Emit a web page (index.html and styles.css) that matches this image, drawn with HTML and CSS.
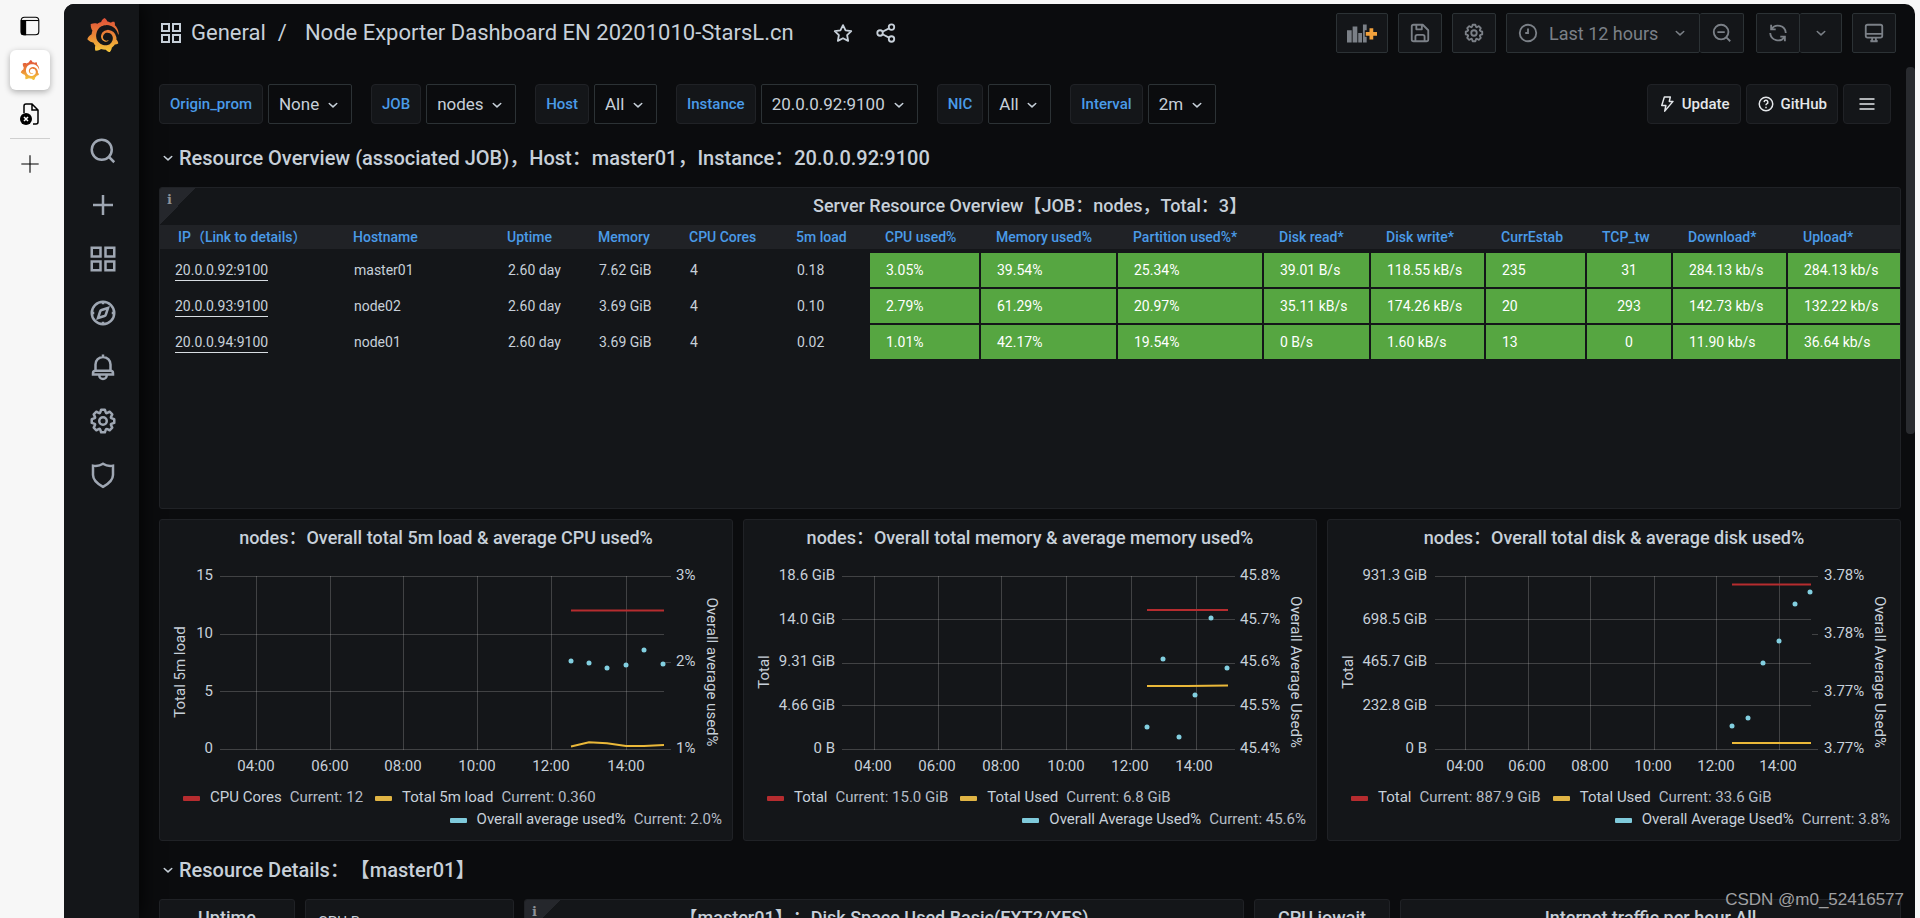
FILE: index.html
```html
<!DOCTYPE html>
<html lang="en">
<head>
<meta charset="utf-8">
<title>Node Exporter Dashboard EN 20201010-StarsL.cn</title>
<link rel="stylesheet" href="styles.css">
</head>
<body>
<svg width="0" height="0" class="defs" aria-hidden="true">
  <defs>
    <linearGradient id="flame" x1="0" y1="0" x2="0" y2="1"><stop offset="0" stop-color="#e0503a"/><stop offset=".5" stop-color="#ea8436"/><stop offset="1" stop-color="#f5c93c"/></linearGradient>
    <symbol id="logo" viewBox="0 0 24 24"><path fill="url(#flame)" d="M23.02 10.59a8.578 8.578 0 0 0-.862-3.034 8.911 8.911 0 0 0-1.789-2.445c.337-1.342-.413-2.505-.413-2.505-1.292-.08-2.113.4-2.416.62-.052-.02-.102-.044-.154-.064-.22-.089-.446-.172-.677-.247-.231-.073-.47-.14-.711-.197a9.867 9.867 0 0 0-.875-.161C14.557.753 12.94 0 12.94 0c-1.804 1.145-2.147 2.744-2.147 2.744l-.018.093c-.098.029-.2.057-.298.088-.138.042-.275.094-.413.143-.138.055-.275.107-.41.166a8.869 8.869 0 0 0-1.557.87l-.063-.029c-2.497-.955-4.716.195-4.716.195-.203 2.658.996 4.33 1.235 4.636a11.608 11.608 0 0 0-.607 2.635C1.636 12.677.953 15.014.953 15.014c1.926 2.214 4.171 2.351 4.171 2.351.003-.002.006-.002.006-.005.285.509.615.994.986 1.446.156.19.32.371.488.548-.704 2.009.099 3.68.099 3.68 2.144.08 3.553-.937 3.849-1.173a9.784 9.784 0 0 0 3.164.501h.08l.055-.003.107-.002.103-.005.003.002c1.01 1.44 2.788 1.646 2.788 1.646 1.264-1.332 1.337-2.653 1.337-2.94v-.058c0-.02-.003-.039-.003-.06.265-.187.52-.387.758-.6a7.875 7.875 0 0 0 1.415-1.7c1.43.083 2.437-.885 2.437-.885-.236-1.49-1.085-2.216-1.264-2.354l-.018-.013-.016-.013a.217.217 0 0 1-.031-.02c.008-.092.016-.18.02-.27.011-.162.016-.323.016-.48v-.253l-.005-.098-.008-.135a1.891 1.891 0 0 0-.01-.13c-.003-.042-.008-.083-.013-.125l-.016-.124-.018-.122a6.215 6.215 0 0 0-2.032-3.73 6.015 6.015 0 0 0-3.222-1.46 6.292 6.292 0 0 0-.85-.048l-.107.002h-.063l-.044.003-.104.008a4.777 4.777 0 0 0-3.335 1.695c-.332.4-.592.84-.768 1.297a4.594 4.594 0 0 0-.312 1.817l.003.091c.005.055.007.11.013.164a3.615 3.615 0 0 0 .698 1.82 3.53 3.53 0 0 0 1.827 1.282c.33.098.66.14.971.137.039 0 .078 0 .114-.002l.063-.003c.02 0 .041-.003.062-.003.034-.002.065-.007.099-.01.007 0 .018-.003.028-.003l.031-.005.06-.008a1.18 1.18 0 0 0 .112-.02c.036-.008.072-.013.109-.024a2.634 2.634 0 0 0 .914-.415c.028-.02.056-.041.085-.065a.248.248 0 0 0 .039-.35.244.244 0 0 0-.309-.06l-.078.042c-.09.044-.184.083-.283.116a2.476 2.476 0 0 1-.475.096c-.028.003-.054.006-.083.006l-.083.002c-.026 0-.054 0-.08-.002l-.102-.006h-.012l-.024.006c-.016-.003-.031-.003-.044-.006-.031-.002-.06-.007-.091-.01a2.59 2.59 0 0 1-.724-.213 2.557 2.557 0 0 1-.667-.438 2.52 2.52 0 0 1-.805-1.475 2.306 2.306 0 0 1-.029-.444l.006-.122v-.023l.002-.031c.003-.021.003-.04.005-.06a3.163 3.163 0 0 1 1.352-2.29 3.12 3.12 0 0 1 .937-.43 2.946 2.946 0 0 1 .776-.101h.06l.07.002.045.003h.026l.07.005a4.041 4.041 0 0 1 1.635.49 3.94 3.94 0 0 1 1.602 1.662 3.77 3.77 0 0 1 .397 1.414l.005.076.003.075c.002.026.002.05.002.075 0 .024.003.052 0 .07v.065l-.002.073-.008.174a6.195 6.195 0 0 1-.08.639 5.1 5.1 0 0 1-.267.927 5.31 5.31 0 0 1-.624 1.13 5.052 5.052 0 0 1-3.237 2.014 4.82 4.82 0 0 1-.649.066l-.039.003h-.287a6.607 6.607 0 0 1-1.716-.265 6.776 6.776 0 0 1-3.4-2.274 6.75 6.75 0 0 1-.746-1.15 6.616 6.616 0 0 1-.714-2.596l-.005-.083-.002-.02v-.056l-.003-.073v-.096l-.003-.104v-.07l.003-.163c.008-.22.026-.45.054-.678a8.707 8.707 0 0 1 .28-1.355c.128-.444.286-.872.473-1.277a7.04 7.04 0 0 1 1.456-2.1 5.925 5.925 0 0 1 .953-.763c.169-.111.343-.213.524-.306.089-.05.182-.091.273-.135.047-.02.093-.042.138-.062a7.177 7.177 0 0 1 .714-.267l.145-.045c.049-.015.098-.026.148-.041.098-.029.197-.052.296-.076.049-.013.1-.02.15-.033l.15-.032.151-.028.076-.013.075-.01.153-.024c.057-.01.114-.013.171-.023l.169-.021c.036-.003.073-.008.106-.01l.073-.008.036-.003.042-.002c.057-.003.114-.008.171-.01l.086-.006h.023l.037-.003.145-.007a7.999 7.999 0 0 1 1.708.125 7.917 7.917 0 0 1 2.048.68 8.253 8.253 0 0 1 1.672 1.09l.09.077.089.078c.06.052.114.107.171.159.057.052.112.106.166.16.052.055.107.107.159.164a8.671 8.671 0 0 1 1.41 1.978c.012.026.028.052.04.078l.04.078.075.156c.023.051.05.1.07.153l.065.15a8.848 8.848 0 0 1 .45 1.34.19.19 0 0 0 .201.142.186.186 0 0 0 .172-.184c.01-.246.002-.532-.024-.856z"/></symbol>
    <symbol id="apps" viewBox="0 0 24 24"><path d="M3 3h7v7H3zM14 3h7v7h-7zM3 14h7v7H3zM14 14h7v7h-7z"/></symbol>
    <symbol id="search" viewBox="0 0 24 24"><circle cx="11" cy="11" r="8"/><path d="m17 17 4 4"/></symbol>
    <symbol id="plus" viewBox="0 0 24 24"><path d="M12 4v16M4 12h16"/></symbol>
    <symbol id="compass" viewBox="0 0 24 24"><circle cx="12" cy="12" r="9"/><path d="m16 8-1.700 5.200a2 2 0 0 1-1.200 1.200L8 16l1.700-5.200a2 2 0 0 1 1.200-1.200zM12 3v2M12 19v2M3 12h2M19 12h2"/></symbol>
    <symbol id="bell" viewBox="0 0 24 24"><path d="M12 2v2M6 15v-5a6 6 0 0 1 12 0v5M4 18v-1a2 2 0 0 1 2-2h12a2 2 0 0 1 2 2v1zM9 18.500a3 3 0 0 0 6 0"/></symbol>
    <symbol id="cog" viewBox="0 0 24 24"><path fill="currentColor" stroke="none" d="M21.32,9.55l-1.89-.63.89-1.78A1,1,0,0,0,20.13,6L18,3.87a1,1,0,0,0-1.15-.19l-1.78.89-.63-1.89A1,1,0,0,0,13.5,2h-3a1,1,0,0,0-.95.68L8.92,4.57,7.14,3.68A1,1,0,0,0,6,3.87L3.87,6a1,1,0,0,0-.19,1.15l.89,1.78-1.89.63A1,1,0,0,0,2,10.5v3a1,1,0,0,0,.68.95l1.89.63-.89,1.78A1,1,0,0,0,3.87,18L6,20.13a1,1,0,0,0,1.15.19l1.78-.89.63,1.89a1,1,0,0,0,.95.68h3a1,1,0,0,0,.95-.68l.63-1.89,1.78.89A1,1,0,0,0,18,20.13L20.13,18a1,1,0,0,0,.19-1.15l-.89-1.78,1.89-.63A1,1,0,0,0,22,13.5v-3A1,1,0,0,0,21.32,9.55ZM20,12.78l-1.2.4A2,2,0,0,0,17.64,16l.57,1.14-1.1,1.1L16,17.64a2,2,0,0,0-2.79,1.16l-.4,1.2H11.22l-.4-1.2A2,2,0,0,0,8,17.64l-1.14.57-1.1-1.1L6.36,16A2,2,0,0,0,5.2,13.18L4,12.78V11.22l1.2-.4A2,2,0,0,0,6.36,8L5.79,6.89l1.1-1.1L8,6.36A2,2,0,0,0,10.82,5.2l.4-1.2h1.56l.4,1.2A2,2,0,0,0,16,6.36l1.14-.57,1.1,1.1L17.64,8a2,2,0,0,0,1.16,2.79l1.2.4ZM12,8a4,4,0,1,0,4,4A4,4,0,0,0,12,8Zm0,6a2,2,0,1,1,2-2A2,2,0,0,1,12,14Z"/></symbol>
    <symbol id="shield" viewBox="0 0 24 24"><path d="M12 3c-2.500 1.600-5.200 2-8 1.500V12c0 4 3.500 7 8 9.500 4.500-2.500 8-5.500 8-9.500V4.500C17.200 5 14.500 4.600 12 3z"/></symbol>
    <symbol id="star" viewBox="0 0 24 24"><path stroke-linejoin="round" d="m12 3.400 2.800 5.700 6.200.9-4.500 4.400 1.100 6.200-5.600-2.900-5.600 2.900 1.100-6.200L3 10l6.200-.9z"/></symbol>
    <symbol id="share" viewBox="0 0 24 24"><circle cx="18" cy="5.500" r="3"/><circle cx="18" cy="18.500" r="3"/><circle cx="5.500" cy="12" r="3"/><path d="m8.200 10.600 7.100-3.700M8.200 13.400l7.100 3.700"/></symbol>
    <symbol id="save" viewBox="0 0 24 24"><path stroke-linejoin="round" d="M3 5a2 2 0 0 1 2-2h10l6 6v10a2 2 0 0 1-2 2H5a2 2 0 0 1-2-2zM8 3v5h6V3M7 21v-5a2 2 0 0 1 2-2h6a2 2 0 0 1 2 2v5"/></symbol>
    <symbol id="clock" viewBox="0 0 24 24"><circle cx="12" cy="12" r="9"/><path d="M12 7v5H9"/></symbol>
    <symbol id="zoom-out" viewBox="0 0 24 24"><circle cx="11" cy="11" r="8"/><path d="m17 17 4 4M7 11h8"/></symbol>
    <symbol id="sync" viewBox="0 0 24 24"><path d="M4.500 3v5h5M4.800 8a8.500 8.500 0 0 1 15.700 4M19.500 21v-5h-5M19.200 16a8.500 8.500 0 0 1-15.700-4"/></symbol>
    <symbol id="monitor" viewBox="0 0 24 24"><path d="M5 3h14a2 2 0 0 1 2 2v10a2 2 0 0 1-2 2H5a2 2 0 0 1-2-2V5a2 2 0 0 1 2-2zM3 13h18M10 17v2a1.500 1.500 0 0 1-1.500 1.500H8M14 17v2a1.500 1.500 0 0 0 1.500 1.500h.500M8 21h8"/></symbol>
    <symbol id="bolt" viewBox="0 0 24 24"><path stroke-linejoin="round" d="M8.500 2.500h8l-1.500 6h5L9 21.500l1.500-7.500H5z"/></symbol>
    <symbol id="question" viewBox="0 0 24 24"><circle cx="12" cy="12" r="9"/><path d="M9.500 9.500a2.500 2.500 0 1 1 3.500 2.300q-1 .5-1 1.700M12 15.500v2"/></symbol>
    <symbol id="bars" viewBox="0 0 24 24"><path d="M3 6h18M3 12h18M3 18h18"/></symbol>
    <symbol id="down" viewBox="0 0 24 24"><path stroke-linecap="round" stroke-linejoin="round" d="m7 10 5 4.500 5-4.500"/></symbol>
    <symbol id="add-panel" viewBox="0 0 32 20"><g fill="currentColor" stroke="none"><path d="M0 7h5v13H0zM6 3h5v17H6zM12 10h4v10h-4zM17 1h4v6h-2v7h2v6h-4z"/></g><path fill="#f2a13c" stroke="none" d="M24 5h4v4h4v4h-4v4h-4v-4h-4V9h4z"/></symbol>
    <symbol id="tabs" viewBox="0 0 20 20"><rect x="2" y="2" width="16" height="16" rx="3"/><path fill="currentColor" d="M2 5h4v13H4a2 2 0 0 1-2-2z"/><path d="M2 5h16"/></symbol>
    <symbol id="bad-file" viewBox="0 0 20 22"><path d="M4 10V3a2 2 0 0 1 2-2h6l6 6v12a2 2 0 0 1-2 2h-3M12 1v6h6"/><circle cx="6" cy="16" r="6" fill="currentColor" stroke="none"/><path stroke="#fff" d="m4 14 4 4M8 14l-4 4"/></symbol>
  </defs>
</svg>

<div class="browser">
  <nav class="tabs" aria-label="Browser tabs">
    <button class="tab" aria-label="Tab list"><svg class="ic s22"><use href="#tabs"/></svg></button>
    <button class="tab active" aria-label="Grafana"><svg class="ic s20"><use href="#logo"/></svg></button>
    <button class="tab" aria-label="Page error"><svg class="ic tab-file"><use href="#bad-file"/></svg></button>
    <hr class="tab-rule">
    <button class="tab" aria-label="New tab"><svg class="ic s26"><use href="#plus"/></svg></button>
  </nav>

  <div class="app">
    <nav class="side" aria-label="Main menu">
      <a class="brand" href="#" aria-label="Home"><svg class="ic s34"><use href="#logo"/></svg></a>
      <a href="#" aria-label="Search"><svg class="ic s30"><use href="#search"/></svg></a>
      <a href="#" aria-label="Create"><svg class="ic s30"><use href="#plus"/></svg></a>
      <a href="#" aria-label="Dashboards"><svg class="ic s30"><use href="#apps"/></svg></a>
      <a href="#" aria-label="Explore"><svg class="ic s30"><use href="#compass"/></svg></a>
      <a href="#" aria-label="Alerting"><svg class="ic s30"><use href="#bell"/></svg></a>
      <a href="#" aria-label="Configuration"><svg class="ic s30"><use href="#cog"/></svg></a>
      <a href="#" aria-label="Server admin"><svg class="ic s30"><use href="#shield"/></svg></a>
    </nav>

    <main class="main">
      <header class="top">
        <svg class="ic s24"><use href="#apps"/></svg>
        <h1 class="crumbs"><a href="#">General</a><span class="slash">/</span><a href="#">Node Exporter Dashboard EN 20201010-StarsL.cn</a></h1>
        <button class="plain" aria-label="Mark as favourite"><svg class="ic s22"><use href="#star"/></svg></button>
        <button class="plain" aria-label="Share"><svg class="ic s22"><use href="#share"/></svg></button>
        <div class="tools">
          <button class="tool add" aria-label="Add panel"><svg class="ic add-ic"><use href="#add-panel"/></svg></button>
          <button class="tool" aria-label="Save"><svg class="ic s22"><use href="#save"/></svg></button>
          <button class="tool" aria-label="Settings"><svg class="ic s22"><use href="#cog"/></svg></button>
          <div class="group wide-gap">
            <button class="tool range"><svg class="ic s22"><use href="#clock"/></svg><span class="range-text">Last 12 hours</span><svg class="ic s18"><use href="#down"/></svg></button>
            <button class="tool" aria-label="Zoom out"><svg class="ic s22"><use href="#zoom-out"/></svg></button>
          </div>
          <div class="group">
            <button class="tool" aria-label="Refresh"><svg class="ic s22"><use href="#sync"/></svg></button>
            <button class="tool small" aria-label="Refresh interval"><svg class="ic s18"><use href="#down"/></svg></button>
          </div>
          <button class="tool" aria-label="Kiosk mode"><svg class="ic s22"><use href="#monitor"/></svg></button>
        </div>
      </header>

      <div class="vars">
        <div class="var"><label for="v1">Origin_prom</label><span class="pick"><select id="v1"><option>None</option></select><svg class="ic s18"><use href="#down"/></svg></span></div>
        <div class="var"><label for="v2">JOB</label><span class="pick"><select id="v2"><option>nodes</option></select><svg class="ic s18"><use href="#down"/></svg></span></div>
        <div class="var"><label for="v3">Host</label><span class="pick"><select id="v3"><option>All</option></select><svg class="ic s18"><use href="#down"/></svg></span></div>
        <div class="var"><label for="v4">Instance</label><span class="pick"><select id="v4"><option>20.0.0.92:9100</option></select><svg class="ic s18"><use href="#down"/></svg></span></div>
        <div class="var"><label for="v5">NIC</label><span class="pick"><select id="v5"><option>All</option></select><svg class="ic s18"><use href="#down"/></svg></span></div>
        <div class="var"><label for="v6">Interval</label><span class="pick"><select id="v6"><option>2m</option></select><svg class="ic s18"><use href="#down"/></svg></span></div>
        <div class="links">
          <a class="link" href="#"><svg class="ic s18"><use href="#bolt"/></svg>Update</a>
          <a class="link" href="#"><svg class="ic s18"><use href="#question"/></svg>GitHub</a>
          <button class="link menu" aria-label="Dashboard links"><svg class="ic s20"><use href="#bars"/></svg></button>
        </div>
      </div>

      <h2 class="row-title"><svg class="ic s18"><use href="#down"/></svg>Resource Overview (associated JOB)，Host：master01，Instance：20.0.0.92:9100</h2>

      <section class="panel overview">
        <span class="info" aria-hidden="true"><i>i</i></span>
        <h3 class="panel-title">Server Resource Overview【JOB：nodes，Total：3】</h3>
        <table class="servers">
          <colgroup><col class="c178"><col class="c154"><col class="c91"><col class="c91"><col class="c107"><col class="c89"><col class="c111"><col class="c137"><col class="c146"><col class="c107"><col class="c115"><col class="c101"><col class="c86"><col class="c115"><col></colgroup>
          <thead><tr><th>IP（Link to details）</th><th>Hostname</th><th>Uptime</th><th>Memory</th><th>CPU Cores</th><th>5m load</th><th>CPU used%</th><th>Memory used%</th><th>Partition used%*</th><th>Disk read*</th><th>Disk write*</th><th>CurrEstab</th><th>TCP_tw</th><th>Download*</th><th>Upload*</th></tr></thead>
          <tbody>
            <tr><td><a href="#">20.0.0.92:9100</a></td><td>master01</td><td>2.60 day</td><td>7.62 GiB</td><td>4</td><td>0.18</td><td class="ok">3.05%</td><td class="ok">39.54%</td><td class="ok">25.34%</td><td class="ok">39.01 B/s</td><td class="ok">118.55 kB/s</td><td class="ok">235</td><td class="ok mid">31</td><td class="ok">284.13 kb/s</td><td class="ok">284.13 kb/s</td></tr>
            <tr><td><a href="#">20.0.0.93:9100</a></td><td>node02</td><td>2.60 day</td><td>3.69 GiB</td><td>4</td><td>0.10</td><td class="ok">2.79%</td><td class="ok">61.29%</td><td class="ok">20.97%</td><td class="ok">35.11 kB/s</td><td class="ok">174.26 kB/s</td><td class="ok">20</td><td class="ok mid">293</td><td class="ok">142.73 kb/s</td><td class="ok">132.22 kb/s</td></tr>
            <tr><td><a href="#">20.0.0.94:9100</a></td><td>node01</td><td>2.60 day</td><td>3.69 GiB</td><td>4</td><td>0.02</td><td class="ok">1.01%</td><td class="ok">42.17%</td><td class="ok">19.54%</td><td class="ok">0 B/s</td><td class="ok">1.60 kB/s</td><td class="ok">13</td><td class="ok mid">0</td><td class="ok">11.90 kb/s</td><td class="ok">36.64 kb/s</td></tr>
          </tbody>
        </table>
      </section>

      <div class="charts">
        <section class="panel">
          <h3 class="panel-title">nodes：Overall total 5m load &amp; average CPU used%</h3>
          <svg class="chart" viewBox="0 0 572 224" role="img" aria-label="Load and CPU chart">
            <path class="grid" d="M60 20.500h451M60 78.500h444M60 135.500h444M60 193.500h451M504 106.500h7M96.500 20v174M170.500 20v174M243.500 20v174M317.500 20v174M391.500 20v174M466.500 20v174"/>
            <g class="end"><text x="53" y="24">15</text><text x="53" y="82">10</text><text x="53" y="140">5</text><text x="53" y="197">0</text></g>
            <g><text x="516" y="24">3%</text><text x="516" y="110">2%</text><text x="516" y="197">1%</text></g>
            <g class="center"><text x="96" y="215">04:00</text><text x="170" y="215">06:00</text><text x="243" y="215">08:00</text><text x="317" y="215">10:00</text><text x="391" y="215">12:00</text><text x="466" y="215">14:00</text>
            <text transform="translate(25 116) rotate(-90)">Total 5m load</text><text transform="translate(547 116) rotate(90)">Overall average used%</text></g>
            <path class="red" d="M411 54.500h93"/>
            <path class="yellow" d="m411 190.500 18-4.200 18 1 19 2.700h18l20-1"/>
            <g class="dots"><circle cx="411" cy="105" r="2.500"/><circle cx="429" cy="107" r="2.500"/><circle cx="447" cy="112" r="2.500"/><circle cx="466" cy="109" r="2.500"/><circle cx="484" cy="94" r="2.500"/><circle cx="503" cy="108" r="2.500"/></g>
          </svg>
          <ul class="legend">
            <li><b class="sw red-sw"></b><span>CPU Cores</span><em>Current: 12</em></li>
            <li><b class="sw yellow-sw"></b><span>Total 5m load</span><em>Current: 0.360</em></li>
            <li class="right"><b class="sw blue-sw"></b><span>Overall average used%</span><em>Current: 2.0%</em></li>
          </ul>
        </section>
        <section class="panel">
          <h3 class="panel-title">nodes：Overall total memory &amp; average memory used%</h3>
          <svg class="chart" viewBox="0 0 572 224" role="img" aria-label="Memory chart">
            <path class="grid" d="M98 20.500h393M98 63.500h393M98 107.500h393M98 149.500h393M98 193.500h393M130.500 20v174M194.500 20v174M257.500 20v174M322.500 20v174M387.500 20v174M452.500 20v174"/>
            <g class="end"><text x="91" y="24">18.6 GiB</text><text x="91" y="68">14.0 GiB</text><text x="91" y="110">9.31 GiB</text><text x="91" y="154">4.66 GiB</text><text x="91" y="197">0 B</text></g>
            <g><text x="496" y="24">45.8%</text><text x="496" y="68">45.7%</text><text x="496" y="110">45.6%</text><text x="496" y="154">45.5%</text><text x="496" y="197">45.4%</text></g>
            <g class="center"><text x="129" y="215">04:00</text><text x="193" y="215">06:00</text><text x="257" y="215">08:00</text><text x="322" y="215">10:00</text><text x="386" y="215">12:00</text><text x="450" y="215">14:00</text>
            <text transform="translate(25 116) rotate(-90)">Total</text><text transform="translate(547 116) rotate(90)">Overall Average Used%</text></g>
            <path class="red" d="M403 54h81"/>
            <path class="yellow" d="M403 130h40l41-.500"/>
            <g class="dots"><circle cx="403" cy="171" r="2.500"/><circle cx="419" cy="103" r="2.500"/><circle cx="435" cy="181" r="2.500"/><circle cx="451" cy="139" r="2.500"/><circle cx="467" cy="62" r="2.500"/><circle cx="483" cy="112" r="2.500"/></g>
          </svg>
          <ul class="legend">
            <li><b class="sw red-sw"></b><span>Total</span><em>Current: 15.0 GiB</em></li>
            <li><b class="sw yellow-sw"></b><span>Total Used</span><em>Current: 6.8 GiB</em></li>
            <li class="right"><b class="sw blue-sw"></b><span>Overall Average Used%</span><em>Current: 45.6%</em></li>
          </ul>
        </section>
        <section class="panel">
          <h3 class="panel-title">nodes：Overall total disk &amp; average disk used%</h3>
          <svg class="chart" viewBox="0 0 572 224" role="img" aria-label="Disk chart">
            <path class="grid" d="M107 20.500h383M107 63.500h376M107 107.500h376M107 149.500h376M107 193.500h383M484 78.500h6M484 135.500h6M137.500 20v174M200.500 20v174M262.500 20v174M326.500 20v174M388.500 20v174M451.500 20v174"/>
            <g class="end"><text x="99" y="24">931.3 GiB</text><text x="99" y="68">698.5 GiB</text><text x="99" y="110">465.7 GiB</text><text x="99" y="154">232.8 GiB</text><text x="99" y="197">0 B</text></g>
            <g><text x="496" y="24">3.78%</text><text x="496" y="82">3.78%</text><text x="496" y="140">3.77%</text><text x="496" y="197">3.77%</text></g>
            <g class="center"><text x="137" y="215">04:00</text><text x="199" y="215">06:00</text><text x="262" y="215">08:00</text><text x="325" y="215">10:00</text><text x="388" y="215">12:00</text><text x="450" y="215">14:00</text>
            <text transform="translate(25 116) rotate(-90)">Total</text><text transform="translate(547 116) rotate(90)">Overall Average Used%</text></g>
            <path class="red" d="M404 28.500h79"/>
            <path class="yellow" d="M404 187h79"/>
            <g class="dots"><circle cx="404" cy="170" r="2.500"/><circle cx="420" cy="162" r="2.500"/><circle cx="435" cy="107" r="2.500"/><circle cx="451" cy="85" r="2.500"/><circle cx="467" cy="48" r="2.500"/><circle cx="482" cy="36" r="2.500"/></g>
          </svg>
          <ul class="legend">
            <li><b class="sw red-sw"></b><span>Total</span><em>Current: 887.9 GiB</em></li>
            <li><b class="sw yellow-sw"></b><span>Total Used</span><em>Current: 33.6 GiB</em></li>
            <li class="right"><b class="sw blue-sw"></b><span>Overall Average Used%</span><em>Current: 3.8%</em></li>
          </ul>
        </section>
      </div>

      <h2 class="row-title"><svg class="ic s18"><use href="#down"/></svg>Resource Details：【master01】</h2>

      <div class="details">
        <section class="panel"><h3 class="panel-title">Uptime</h3></section>
        <section class="panel"><p class="gauge-label">CPU Busy</p></section>
        <section class="panel"><span class="info" aria-hidden="true"><i>i</i></span><h3 class="panel-title">【master01】：Disk Space Used Basic(EXT2/XFS)</h3></section>
        <section class="panel"><h3 class="panel-title">CPU iowait</h3></section>
        <section class="panel"><h3 class="panel-title">Internet traffic per hour All</h3></section>
      </div>
      <div class="thumb"></div>
    </main>
  </div>
</div>
<div class="watermark">CSDN @m0_52416577</div>
</body>
</html>
```
FILE: styles.css
```css
* { box-sizing: border-box; }
body {
  margin: 0;
  height: 100vh;
  overflow: hidden;
  background: #f7f7f7;
  color: #c7d0d9;
  font-family: Roboto, "Noto Sans CJK SC", sans-serif;
  font-size: 15px;
  text-spacing-trim: space-all;
}
h1, h2, h3, p, ul { margin: 0; padding: 0; }
a { color: inherit; text-decoration: none; }
button, select { font: inherit; color: inherit; margin: 0; }
.defs { position: absolute; }

.ic { display: block; flex: none; fill: none; stroke: currentColor; stroke-width: 2; }
.s18 { width: 18px; height: 18px; }
.s20 { width: 20px; height: 20px; }
.s22 { width: 22px; height: 22px; }
.s24 { width: 24px; height: 24px; }
.s26 { width: 26px; height: 26px; }
.s30 { width: 30px; height: 30px; }
.s34 { width: 34px; height: 34px; }
.s34, .tab.active .ic { stroke: none; }

.browser { display: flex; height: 100vh; padding: 4px 5px 0 0; }
.tabs { width: 64px; flex: none; padding: 2px 5px 0 0; display: flex; flex-direction: column; align-items: center; gap: 4px; }
.tab { width: 40px; height: 40px; padding: 0; display: grid; place-items: center; border: 0; border-radius: 6px; background: none; color: #000; }
.tab.active { background: #fff; box-shadow: 0 2px 6px rgba(0, 0, 0, .3); }
.tab .ic { stroke-width: 1; }
.tab .tab-file { width: 20px; height: 22px; stroke-width: 1.5; }
.tab-rule { width: 40px; height: 1px; margin: 0 0 1px; border: 0; background: #cfcfcf; }

.app { flex: 1; min-width: 0; display: flex; border-radius: 10px 10px 0 0; overflow: hidden; background: #0b0c0e; }
.side { position: relative; width: 75px; flex: none; display: flex; flex-direction: column; align-items: center; background: #141619; color: #9fa7b3; box-shadow: 0 0 20px #000; }
.side a { height: 54px; display: grid; place-items: center; padding-left: 2px; }
.side .brand { height: 62px; margin-bottom: 58px; }

.main { position: relative; flex: 1; min-width: 0; padding: 0 14px 0 20px; }
.top { display: flex; align-items: center; height: 80px; padding: 0 5px 22px 0; }
.crumbs { display: flex; margin-left: 8px; font-size: 22px; font-weight: 400; line-height: 28px; white-space: nowrap; }
.slash { margin: 0 18px 0 12px; }
.plain { padding: 0; margin-left: 21px; border: 0; background: none; }
.crumbs + .plain { margin-left: 38px; }
.tools { display: flex; margin-left: auto; color: #7b8087; gap: 10px; }
.tool { height: 40px; width: 44px; display: flex; align-items: center; justify-content: center; padding: 0; border: 1px solid #2c3235; border-radius: 2px; background: #141619; }
.tool.add { width: 52px; }
.add-ic { width: 30px; height: 20px; }
.group { display: flex; }
.wide-gap { margin-right: 2px; }
.group .tool + .tool { border-left: 0; }
.tool.range { width: 194px; justify-content: space-between; padding: 0 10px; }
.range-text { font-size: 18px; flex: 1; padding-left: 10px; text-align: left; }
.tool.small { width: 42px; }

.vars { display: flex; margin-bottom: 5px; padding-right: 10px; gap: 19px; }
.var { display: flex; gap: 5px; }
.var label, .link { display: flex; align-items: center; height: 40px; padding: 0 10px; border: 1px solid #202226; border-radius: 4px; background: #141619; font-size: 15px; font-weight: 500; }
.var label { color: #4a9be8; }
.pick { position: relative; }
.pick select { height: 40px; padding: 0 31px 0 10px; appearance: none; border: 1px solid #2c3235; border-radius: 2px; background: #0b0c0e; font-size: 17px; }
.pick .ic { position: absolute; right: 10px; top: 12px; pointer-events: none; }
.links { display: flex; gap: 5px; margin-left: auto; color: #e4e7ea; }
.link { gap: 6px; }
.link.menu { padding: 0 13px; }

.row-title { display: flex; align-items: center; gap: 2px; height: 58px; font-size: 20px; line-height: 24px; font-weight: 500; }

.panel { position: relative; border: 1px solid #202226; border-radius: 3px; background: #141619; min-width: 0; overflow: hidden; }
.panel-title { height: 36px; line-height: 36px; text-align: center; white-space: nowrap; font-size: 18px; font-weight: 500; }
.info { position: absolute; left: 0; top: 0; width: 35px; height: 37px; background: linear-gradient(to bottom right, #25272c 50%, transparent 50%); color: #8e9299; }
.info i { display: block; padding: 4px 0 0 7px; font: 700 13px/16px "DejaVu Serif", serif; }

.overview { height: 322px; margin-bottom: 10px; }
.overview .panel-title { height: 37px; }
.servers { width: 100%; table-layout: fixed; border-collapse: separate; border-spacing: 0; font-size: 14px; line-height: 20px; white-space: nowrap; }
.servers th { height: 24px; padding: 0 0 0 15px; background: #202226; color: #4a9be8; font-weight: 500; text-align: left; }
.servers th:first-child { padding-left: 18px; }
.servers td { height: 36px; padding: 0 0 0 16px; border-right: 2px solid #141619; border-bottom: 2px solid #141619; }
.servers td:first-child { padding-left: 15px; }
.servers tbody tr:first-child td { height: 40px; border-top: 4px solid #141619; }
.servers td:last-child { border-right: 0; }
.servers .ok { background: #56a641; color: #fff; }
.servers .mid { padding: 0; text-align: center; }
.servers td a { padding-bottom: 2px; border-bottom: 1px solid #d8dde2; }
.c178 { width: 178px; } .c154 { width: 154px; } .c91 { width: 91px; } .c107 { width: 107px; } .c89 { width: 89px; }
.c111 { width: 111px; } .c137 { width: 137px; } .c146 { width: 146px; } .c115 { width: 115px; } .c101 { width: 101px; } .c86 { width: 86px; }

.charts { display: grid; grid-template-columns: repeat(3, minmax(0, 1fr)); gap: 10px; }
.chart { display: block; width: 100%; fill: #c7d0d9; font-size: 15px; }
.end { text-anchor: end; }
.center { text-anchor: middle; }
.grid { fill: none; stroke: #c8c8c8; stroke-opacity: .25; stroke-width: 1; }
.red, .yellow { fill: none; stroke-width: 2; }
.red { stroke: #b62c2f; }
.yellow { stroke: #eab839; }
.dots { fill: #82cfe0; }
.legend { display: flex; flex-wrap: wrap; gap: 0 12px; padding: 6px 10px 10px 23px; list-style: none; line-height: 22px; }
.legend li { display: flex; align-items: center; gap: 8px; white-space: nowrap; }
.legend .right { width: 100%; justify-content: flex-end; }
.legend em { font-style: normal; color: #b4bcc6; }
.sw { width: 17px; height: 5px; margin: 3px 2px 0 0; border-radius: 1px; }
.red-sw { background: #b62c2f; }
.yellow-sw { background: #e0b444; }
.blue-sw { background: #7fcadb; }

.details { display: grid; grid-template-columns: 136fr 209fr 720fr 136fr 501fr; gap: 10px; }
.details .panel { height: 120px; }
.gauge-label { padding: 13px 12px; font-size: 15px; line-height: 18px; }

.thumb { position: absolute; right: 0; top: 63px; width: 9px; height: 367px; border-radius: 4px; background: #292b2f; }
.watermark { position: absolute; right: 16px; bottom: 7px; color: #a0a1a3; font: 17px/22px "Liberation Sans", sans-serif; }
```
